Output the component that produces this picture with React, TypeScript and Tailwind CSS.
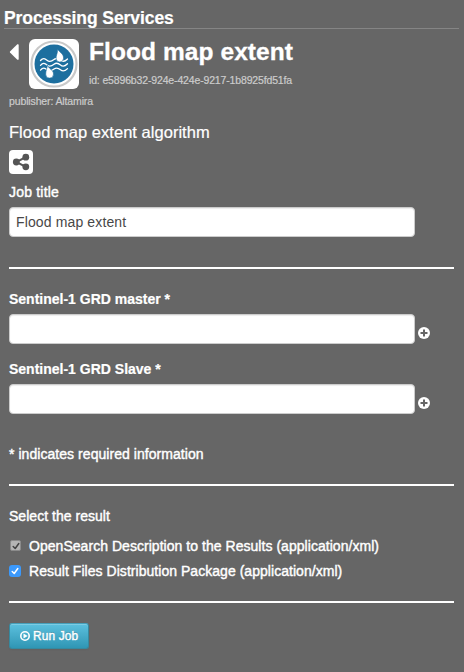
import React from "react";

const stroke = "[-webkit-text-stroke:0.4px_currentColor]";

function FloodLogo() {
  return (
    <svg viewBox="0 0 50 50" className="h-[50px] w-[50px] rounded-[6px] bg-white">
      <circle cx="25" cy="25" r="22.5" fill="#fff" stroke="#c9c9c9" strokeWidth="2.2" />
      <circle cx="25" cy="25" r="19.5" fill="#1d6f9f" />
      <g fill="none" stroke="#fff" strokeWidth="1.3" strokeLinecap="round">
        <path d="M11.500 21.500C14 18.500 16 19.500 18 21.200S22.500 22.500 25 20.500S29.500 19.500 31.500 21.200S36 22.500 38.500 20" />
        <path d="M11.500 26.300C14 23.300 16 24.300 18 26S22.500 27.300 25 25.300S29.500 24.300 31.500 26S36 27.300 38.500 24.800" />
        <path d="M11.500 31.100C14 28.100 16 29.100 18 30.800S22.500 32.100 25 30.100S29.500 29.100 31.500 30.800S36 32.100 38.500 29.600" />
      </g>
      <path d="M28.500 10.500C31.500 13.500 35 15.700 34.500 19.400a3.700 3.700 0 0 1-7.400-.2C26.900 16.500 28.800 14 28.500 10.500z" fill="#fff" stroke="#1d6f9f" strokeWidth=".6" />
      <path d="M18.300 25.800C18.800 29 25 31.500 24.500 35.200a3.900 3.900 0 0 1-7.800 0C16.500 32 18.500 29 18.300 25.800z" fill="#fff" stroke="#1d6f9f" strokeWidth=".6" />
    </svg>
  );
}

function Field({ value, add }: { value?: string; add?: boolean }) {
  return (
    <div className="flex h-[30px]">
      <input
        type="text"
        defaultValue={value}
        className="h-[30px] w-[406px] rounded-[4px] border border-[#ccc] bg-white px-[6px] text-[14px] tracking-[0.13px] text-[#484848] shadow-[inset_0_1px_1px_rgba(0,0,0,0.075)] outline-none"
      />
      {add && (
        <button className="mt-[13px] ml-[3px] h-[12px] w-[12px]">
          <svg viewBox="0 0 12 12" className="block h-3 w-3">
            <circle cx="6" cy="6" r="6" fill="#fff" />
            <path d="M6 2.500V9.500M2.500 6H9.500" stroke="#666" strokeWidth="2" />
          </svg>
        </button>
      )}
    </div>
  );
}

function Check({ disabled, children }: { disabled?: boolean; children: React.ReactNode }) {
  return (
    <label className="flex h-[25px] items-center">
      <span
        className={
          disabled
            ? "mr-2 ml-px flex h-[11px] w-[11px] items-center justify-center rounded-[2px] border border-[#8b8b8b] bg-[#b5b5b5] text-[#444]"
            : "mr-2 flex h-3 w-3 items-center justify-center rounded-[3px] bg-[#3b99fc] text-white"
        }
      >
        <svg viewBox="0 0 10 10" className="h-[10px] w-[10px] shrink-0" fill="none" stroke="currentColor" strokeWidth="1.5" strokeLinecap="round" strokeLinejoin="round">
          <path d="M2.200 5.500L4.200 7.500L7.800 2.500" />
        </svg>
      </span>
      <span className={`pt-[2px] text-[14px] whitespace-nowrap tracking-[0.04px] ${stroke}`}>{children}</span>
    </label>
  );
}

export default function App() {
  return (
    <main className="h-[672px] w-[464px] overflow-hidden bg-[#666] font-['Liberation_Sans',Arial,sans-serif] text-white">
      <h1 className="mr-[5px] ml-1 h-[29px] border-b border-[#858585] pt-2 text-[17.5px] leading-[20px] font-bold tracking-[-0.08px] [-webkit-text-stroke:0.2px_currentColor]">
        Processing Services
      </h1>
      <div className="mr-[10px] ml-[9px]">
        <header className="flex h-[60px] pt-[10px]">
          <svg viewBox="0 0 10 16" className="mt-[5px] mr-[10px] h-4 w-[10px] fill-white">
            <path d="M1 7.400L8.300.3Q9.700-.2 9.700 1V15Q9.700 16.200 8.300 15.700L1 8.600Q.6 8 1 7.400z" />
          </svg>
          <FloodLogo />
          <div className="ml-[10px]">
            <h2 className="h-[30px] text-[24.5px] leading-[26px] font-bold tracking-[0.08px] [-webkit-text-stroke:0.3px_currentColor]">Flood map extent</h2>
            <p className="text-[10.5px] leading-[23px] tracking-[-0.15px] text-[#ccc] [-webkit-text-stroke:0.2px_currentColor]">id: e5896b32-924e-424e-9217-1b8925fd51fa</p>
          </div>
        </header>
        <p className="h-[30px] pt-[6px] text-[10.5px] leading-[12px] tracking-[-0.13px] text-[#ccc] [-webkit-text-stroke:0.2px_currentColor]">publisher: Altamira</p>
        <p className="h-[31px] pt-[3px] text-[16.5px] leading-[20px] tracking-[0.03px] [-webkit-text-stroke:0.2px_currentColor]">Flood map extent algorithm</p>
        <button className="flex h-6 w-6 items-center justify-center rounded-[4px] bg-white">
          <svg viewBox="0 0 24 24" className="h-6 w-6" fill="#555" stroke="#555">
            <path d="M16.800 7.200L7.300 12L16.800 16.800" fill="none" strokeWidth="2" />
            <circle cx="16.800" cy="7.200" r="3.400" stroke="none" />
            <circle cx="7.300" cy="12" r="3.400" stroke="none" />
            <circle cx="16.800" cy="16.800" r="3.400" stroke="none" />
          </svg>
        </button>
        <label className={`block h-[33px] pt-2 text-[14px] leading-[20px] tracking-[0.2px] ${stroke}`}>Job title</label>
        <Field value="Flood map extent" />
        <hr className="mt-[30px] h-[2px] border-0 bg-white" />
        <label className="block h-[45px] pt-[20px] text-[14px] leading-[20px] font-bold [-webkit-text-stroke:0.2px_currentColor]">Sentinel-1 GRD master *</label>
        <Field add />
        <label className="block h-[40px] pt-[15px] text-[14px] leading-[20px] font-bold [-webkit-text-stroke:0.2px_currentColor]">Sentinel-1 GRD Slave *</label>
        <Field add />
        <p className={`h-[70px] pt-[30px] text-[14px] leading-[20px] tracking-[0.05px] ${stroke}`}>* indicates required information</p>
        <hr className="h-[2px] border-0 bg-white" />
        <p className={`h-[47px] pt-[20px] text-[14px] leading-[20px] tracking-[0.03px] ${stroke}`}>Select the result</p>
        <Check disabled>OpenSearch Description to the Results (application/xml)</Check>
        <Check>Result Files Distribution Package (application/xml)</Check>
        <hr className="mt-[18px] h-[2px] border-0 bg-white" />
        <button className="mt-5 flex h-[26px] w-[80px] items-center rounded-[3px] border border-[#36899f] border-t-[#46a0bb] bg-linear-to-b from-[#5bc0de] to-[#2f96b4] pl-[10px] text-[11.9px] shadow-[inset_0_1px_0_rgba(255,255,255,0.2),0_1px_2px_rgba(0,0,0,0.05)] [text-shadow:0_-1px_0_rgba(0,0,0,0.25)]">
          <svg viewBox="0 0 10 10" className="mr-[3px] h-[10px] w-[10px]">
            <circle cx="5" cy="5" r="4.200" fill="none" stroke="#fff" strokeWidth="1.600" />
            <path d="M3.500 2.400L7.700 5L3.500 7.600z" fill="#fff" />
          </svg>
          <span className={`pt-px whitespace-nowrap tracking-[0.15px] ${stroke}`}>Run Job</span>
        </button>
      </div>
    </main>
  );
}
